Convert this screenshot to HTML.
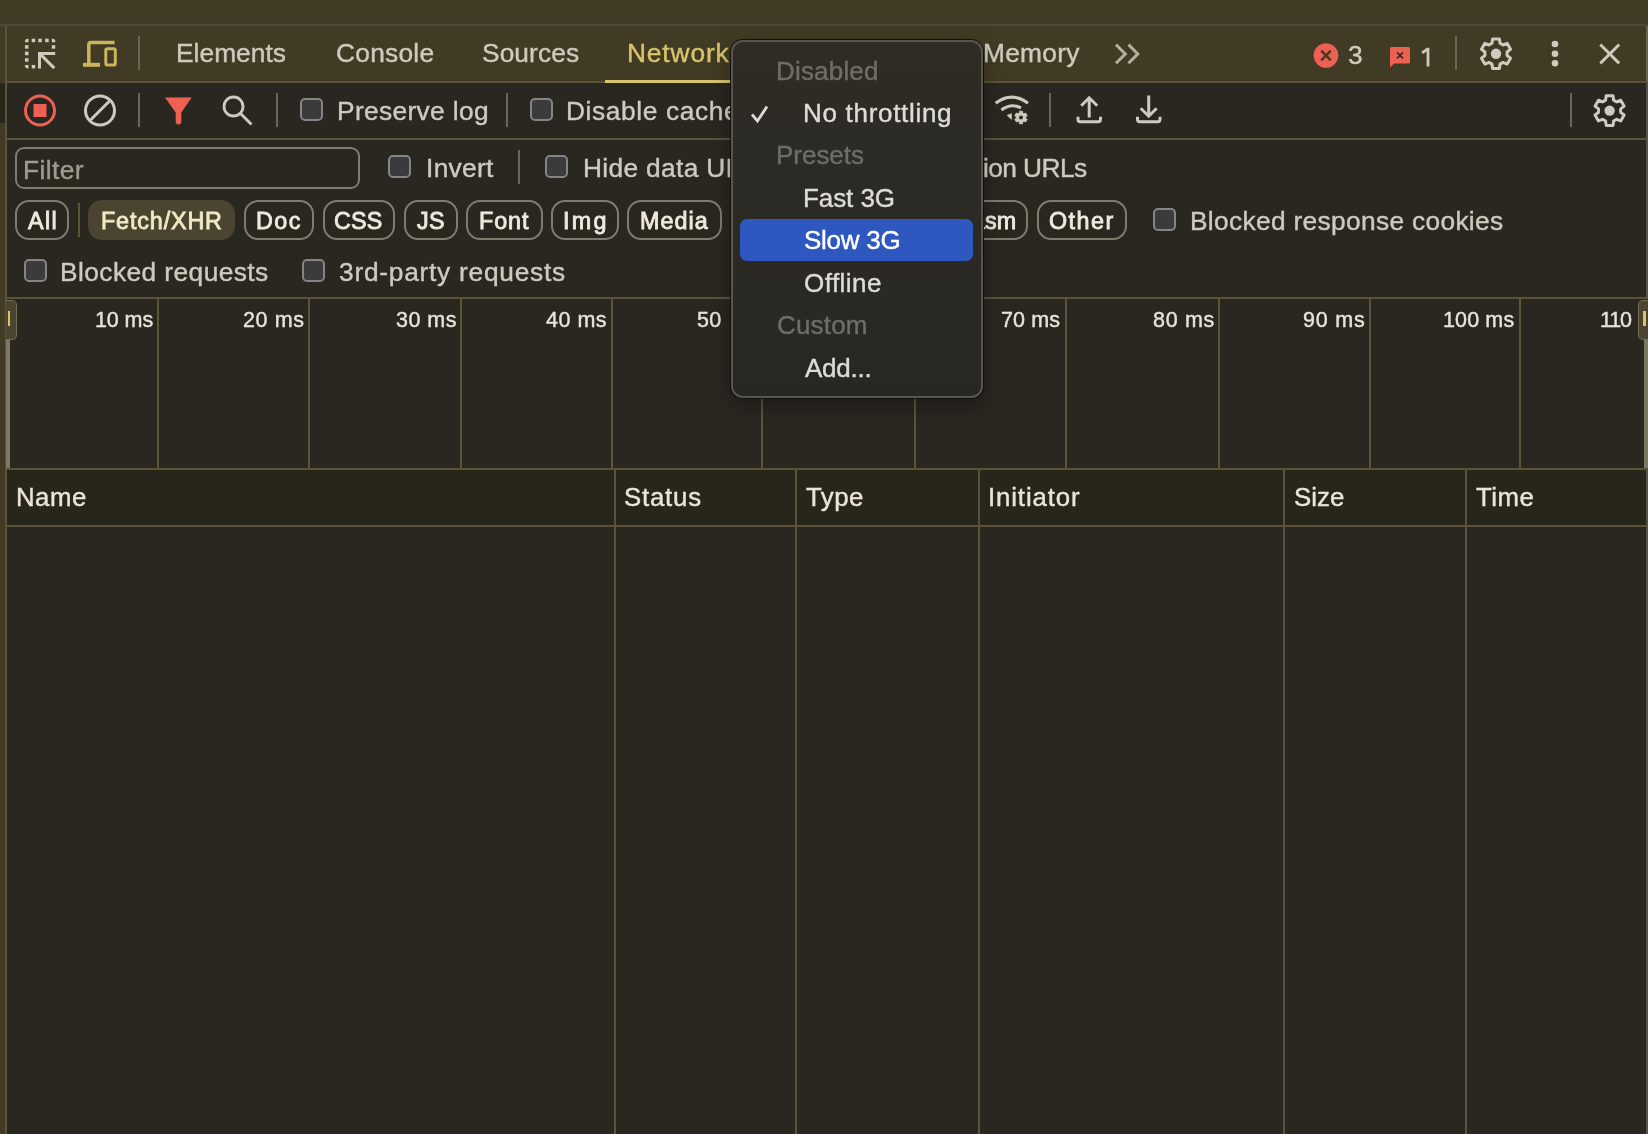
<!DOCTYPE html>
<html><head><meta charset="utf-8"><style>
html,body{margin:0;padding:0;}
body{width:1648px;height:1134px;overflow:hidden;position:relative;background:#2a2620;font-family:"Liberation Sans",sans-serif;}
body>div,body>svg{position:absolute;box-sizing:content-box;}
.t{white-space:pre;will-change:transform;-webkit-text-stroke:0.4px currentColor;}
</style></head><body>
<div style="left:0px;top:0px;width:1648px;height:24px;background:#413a24;"></div>
<div style="left:0px;top:24px;width:1648px;height:2px;background:#4a473b;"></div>
<div style="left:0px;top:26px;width:1648px;height:55px;background:#413a24;"></div>
<div style="left:0px;top:81px;width:1648px;height:2px;background:#5b5339;"></div>
<div style="left:0px;top:138px;width:1648px;height:2px;background:#5b5339;"></div>
<div style="left:0px;top:297px;width:1648px;height:2px;background:#5b5339;"></div>
<div style="left:0px;top:468px;width:1648px;height:2px;background:#5b5339;"></div>
<div style="left:0px;top:470px;width:1648px;height:55px;background:#28251b;"></div>
<div style="left:0px;top:525px;width:1648px;height:2px;background:#5b5339;"></div>
<div style="left:0px;top:26px;width:5px;height:1108px;background:#413a24;"></div>
<div style="left:0px;top:83px;width:5px;height:40px;background:#28251a;"></div>
<div style="left:5px;top:26px;width:2px;height:1108px;background:#5b5339;"></div>
<div style="left:1646px;top:26px;width:2px;height:55px;background:#6a6550;"></div>
<div style="left:1646px;top:83px;width:2px;height:1051px;background:#55544c;"></div>
<div style="left:614px;top:470px;width:2px;height:664px;background:#5b5339;"></div>
<div style="left:795px;top:470px;width:2px;height:664px;background:#5b5339;"></div>
<div style="left:978px;top:470px;width:2px;height:664px;background:#5b5339;"></div>
<div style="left:1283px;top:470px;width:2px;height:664px;background:#5b5339;"></div>
<div style="left:1465px;top:470px;width:2px;height:664px;background:#5b5339;"></div>
<div style="left:157px;top:299px;width:2px;height:169px;background:#5e5538;"></div>
<div style="left:308px;top:299px;width:2px;height:169px;background:#5e5538;"></div>
<div style="left:460px;top:299px;width:2px;height:169px;background:#5e5538;"></div>
<div style="left:611px;top:299px;width:2px;height:169px;background:#5e5538;"></div>
<div style="left:761px;top:299px;width:2px;height:169px;background:#5e5538;"></div>
<div style="left:914px;top:299px;width:2px;height:169px;background:#5e5538;"></div>
<div style="left:1065px;top:299px;width:2px;height:169px;background:#5e5538;"></div>
<div style="left:1218px;top:299px;width:2px;height:169px;background:#5e5538;"></div>
<div style="left:1369px;top:299px;width:2px;height:169px;background:#5e5538;"></div>
<div style="left:1519px;top:299px;width:2px;height:169px;background:#5e5538;"></div>
<svg style="left:0px;top:0px;" width="200" height="80" viewBox="0 0 200 80"><g fill="#cfcabe"><rect x="31.7" y="38.7" width="3.5" height="3.5"/><rect x="38.3" y="38.7" width="3.5" height="3.5"/><rect x="45.2" y="38.7" width="3.5" height="3.5"/><rect x="51.8" y="45.2" width="3.5" height="3.5"/><rect x="25" y="45.2" width="3.5" height="3.5"/><rect x="25" y="51.7" width="3.5" height="3.5"/><rect x="25" y="58.2" width="3.5" height="3.5"/><rect x="31.7" y="64.9" width="3.5" height="3.5"/>
<path d="M25 42.2 V41.5 Q25 38.7 27.8 38.7 H28.5 V42.2 Z"/>
<path d="M55.3 42.2 V41.5 Q55.3 38.7 52.5 38.7 H51.8 V42.2 Z"/>
<path d="M25 64.9 V65.6 Q25 68.4 27.8 68.4 H28.5 V64.9 Z"/>
<path d="M38 68.4 V52 H55.2 V55 H43.2 L55.3 67.1 L53.2 69.2 L41 57 V68.4 Z"/></g></svg>
<svg style="left:0px;top:0px;" width="200" height="80" viewBox="0 0 200 80"><path d="M88.8 63.5 V44.8 Q88.8 42.6 91 42.6 H114.6" stroke="#c9b55b" stroke-width="3.5" fill="none"/>
<rect x="83" y="62.8" width="17" height="4" fill="#c9b55b"/>
<rect x="105.8" y="48.8" width="9.5" height="16.2" rx="1.6" stroke="#c9b55b" stroke-width="3" fill="none"/></svg>
<div style="left:138px;top:36px;width:2px;height:34px;background:#6a6659;"></div>
<div class="t" style="left:176.20px;top:40.34px;font-size:26.3px;line-height:26.3px;color:#cfcabe;letter-spacing:0.047px;">Elements</div>
<div class="t" style="left:335.60px;top:40.34px;font-size:26.3px;line-height:26.3px;color:#cfcabe;letter-spacing:0.257px;">Console</div>
<div class="t" style="left:482.30px;top:40.34px;font-size:26.3px;line-height:26.3px;color:#cfcabe;letter-spacing:0.097px;">Sources</div>
<div class="t" style="left:627.30px;top:40.34px;font-size:26.3px;line-height:26.3px;color:#d9c46a;letter-spacing:0.868px;">Network</div>
<div style="left:605px;top:80px;width:126px;height:3px;background:#d9c46a;"></div>
<div class="t" style="left:982.60px;top:40.34px;font-size:26.3px;line-height:26.3px;color:#cfcabe;letter-spacing:0.276px;">Memory</div>
<svg style="left:0px;top:0px;" width="1648" height="80" viewBox="0 0 1648 80"><path d="M1116 44.6 L1125.3 53.9 L1116 63.2 M1128.5 44.6 L1137.8 53.9 L1128.5 63.2" stroke="#b3ae9f" stroke-width="3" fill="none"/></svg>
<svg style="left:1313px;top:43px;" width="26" height="26" viewBox="0 0 26 26"><circle cx="13" cy="12.5" r="12.3" fill="#ee6152"/><path d="M8.2 7.7 L17.8 17.3 M17.8 7.7 L8.2 17.3" stroke="#413a24" stroke-width="2.4"/></svg>
<div class="t" style="left:1347.60px;top:42.34px;font-size:26.3px;line-height:26.3px;color:#cfcabe;">3</div>
<svg style="left:1389px;top:46px;" width="23" height="23" viewBox="0 0 23 23"><path d="M1 2.5 Q1 1 2.5 1 H19.5 Q21 1 21 2.5 V16 Q21 17.5 19.5 17.5 H5 L1 21.5 Z" fill="#ee6152"/><path d="M8 6.3 L14 12.4 M14 6.3 L8 12.4" stroke="#2e2a1c" stroke-width="1.5"/></svg>
<svg style="left:0px;top:0px;" width="1648" height="80" viewBox="0 0 1648 80"><path d="M1422.2 52.9 L1427.4 49.2 H1428 V66.5" stroke="#cfcabe" stroke-width="2.8" fill="none" stroke-linejoin="miter"/></svg>
<div style="left:1455px;top:36px;width:2px;height:34px;background:#6a6659;"></div>
<svg style="left:1478px;top:36px;" width="36" height="36" viewBox="0 0 36 36"><path d="M14.58 2.89 L21.42 2.89 L22.01 7.24 L25.05 9.00 L29.12 7.33 L32.54 13.26 L29.06 15.95 L29.06 19.45 L32.54 22.14 L29.12 28.07 L25.05 26.40 L22.01 28.16 L21.42 32.51 L14.58 32.51 L13.99 28.16 L10.95 26.40 L6.88 28.07 L3.46 22.14 L6.94 19.45 L6.94 15.95 L3.46 13.26 L6.88 7.33 L10.95 9.00 L13.99 7.24 Z" fill="none" stroke="#cfcabe" stroke-width="3" stroke-linejoin="round"/><circle cx="18" cy="17.7" r="5.2" fill="#cfcabe"/></svg>
<svg style="left:1548px;top:38px;" width="14" height="30" viewBox="0 0 14 30"><g fill="#cfcabe"><circle cx="7" cy="6" r="3.3"/><circle cx="7" cy="15.7" r="3.3"/><circle cx="7" cy="25.2" r="3.3"/></g></svg>
<svg style="left:0px;top:0px;" width="1648" height="80" viewBox="0 0 1648 80"><path d="M1600.3 44.5 L1619.2 63.4 M1619.2 44.5 L1600.3 63.4" stroke="#cfcabe" stroke-width="2.9"/></svg>
<svg style="left:22px;top:92px;" width="36" height="36" viewBox="0 0 36 36"><circle cx="18" cy="18.5" r="14.5" stroke="#ee6152" stroke-width="3" fill="none"/><rect x="11.5" y="12" width="13" height="13" fill="#ee6152"/></svg>
<svg style="left:82px;top:92px;" width="36" height="36" viewBox="0 0 36 36"><circle cx="18" cy="18.5" r="14.5" stroke="#cfcabe" stroke-width="3" fill="none"/><path d="M8.5 28 L27.5 9" stroke="#cfcabe" stroke-width="3"/></svg>
<div style="left:138px;top:93px;width:2px;height:34px;background:#6a6659;"></div>
<svg style="left:0px;top:0px;" width="300" height="140" viewBox="0 0 300 140"><path d="M165.5 97.8 H191.2 L181 112.5 V122 Q181 124.2 178.5 124.2 Q176 124.2 176 122 V112.5 Z" fill="#ee6152" stroke="#ee6152" stroke-width="0.6" stroke-linejoin="round"/></svg>
<svg style="left:220px;top:93px;" width="36" height="36" viewBox="0 0 36 36"><circle cx="13.5" cy="13.5" r="9.5" stroke="#cfcabe" stroke-width="2.8" fill="none"/><path d="M20.5 20.5 L31.5 31.5" stroke="#cfcabe" stroke-width="2.8"/></svg>
<div style="left:276px;top:93px;width:2px;height:34px;background:#6a6659;"></div>
<div style="left:300px;top:98px;width:19px;height:19px;border:2px solid #858585;border-radius:5px;background:#3b3b3b"></div>
<div class="t" style="left:336.90px;top:97.94px;font-size:26.3px;line-height:26.3px;color:#cfcabe;letter-spacing:0.355px;">Preserve log</div>
<div style="left:506px;top:93px;width:2px;height:34px;background:#6a6659;"></div>
<div style="left:530px;top:98px;width:19px;height:19px;border:2px solid #858585;border-radius:5px;background:#3b3b3b"></div>
<div class="t" style="left:566.40px;top:97.94px;font-size:26.3px;line-height:26.3px;color:#cfcabe;letter-spacing:0.621px;">Disable cache</div>
<svg style="left:0px;top:0px;pointer-events:none" width="1648" height="140" viewBox="0 0 1648 140"><path d="M995.6 103.2 Q1011.8 91 1028 103.2" stroke="#cfcabe" stroke-width="3.1" fill="none"/>
<path d="M1001.4 110 Q1011 102.6 1021 107.9" stroke="#cfcabe" stroke-width="3" fill="none"/>
<path d="M1011.8 113.3 L1006.6 115.3 L1011.8 120 Z" fill="#cfcabe"/>
<g transform="translate(1021,117.5)"><path d="M-1.57 -6.31 L1.57 -6.31 L1.76 -4.36 L2.89 -3.70 L4.68 -4.52 L6.25 -1.79 L4.65 -0.65 L4.65 0.65 L6.25 1.79 L4.68 4.52 L2.89 3.70 L1.76 4.36 L1.57 6.31 L-1.57 6.31 L-1.76 4.36 L-2.89 3.70 L-4.68 4.52 L-6.25 1.79 L-4.65 0.65 L-4.65 -0.65 L-6.25 -1.79 L-4.68 -4.52 L-2.89 -3.70 L-1.76 -4.36 Z" fill="#cfcabe" stroke="#cfcabe" stroke-width="0.8" stroke-linejoin="round"/><circle r="1.9" fill="#2a2620"/></g></svg>
<div style="left:1049px;top:93px;width:2px;height:34px;background:#6a6659;"></div>
<svg style="left:0px;top:0px;" width="1648" height="140" viewBox="0 0 1648 140"><path d="M1089.2 117.5 V98.5 M1081.2 105.8 L1089.2 97.8 L1097.2 105.8" stroke="#cfcabe" stroke-width="3" fill="none"/><path d="M1078 116.8 V119.5 Q1078 121.7 1080.2 121.7 H1098.2 Q1100.5 121.7 1100.5 119.5 V116.8" stroke="#cfcabe" stroke-width="3" fill="none"/></svg>
<svg style="left:0px;top:0px;" width="1648" height="140" viewBox="0 0 1648 140"><path d="M1148.7 95.5 V115.5 M1140.7 108.2 L1148.7 116.2 L1156.7 108.2" stroke="#cfcabe" stroke-width="3" fill="none"/><path d="M1137.5 116.8 V119.5 Q1137.5 121.7 1139.7 121.7 H1157.7 Q1160 121.7 1160 119.5 V116.8" stroke="#cfcabe" stroke-width="3" fill="none"/></svg>
<div style="left:1570px;top:93px;width:2px;height:34px;background:#6a6659;"></div>
<svg style="left:1592px;top:93px;" width="36" height="36" viewBox="0 0 36 36"><path d="M14.18 2.79 L21.02 2.79 L21.61 7.14 L24.65 8.90 L28.72 7.23 L32.14 13.16 L28.66 15.85 L28.66 19.35 L32.14 22.04 L28.72 27.97 L24.65 26.30 L21.61 28.06 L21.02 32.41 L14.18 32.41 L13.59 28.06 L10.55 26.30 L6.48 27.97 L3.06 22.04 L6.54 19.35 L6.54 15.85 L3.06 13.16 L6.48 7.23 L10.55 8.90 L13.59 7.14 Z" fill="none" stroke="#cfcabe" stroke-width="3" stroke-linejoin="round"/><circle cx="17.6" cy="17.6" r="5.2" fill="#cfcabe"/></svg>
<div style="left:15px;top:146.5px;width:341px;height:38px;border:2px solid #7f7c6e;border-radius:9px"></div>
<div class="t" style="left:22.90px;top:156.64px;font-size:26.3px;line-height:26.3px;color:#9f9c8e;letter-spacing:0.424px;">Filter</div>
<div style="left:388px;top:155px;width:19px;height:19px;border:2px solid #858585;border-radius:5px;background:#3b3b3b"></div>
<div class="t" style="left:425.70px;top:155.14px;font-size:26.3px;line-height:26.3px;color:#cfcabe;letter-spacing:0.328px;">Invert</div>
<div style="left:518px;top:150px;width:2px;height:34px;background:#6a6659;"></div>
<div style="left:545px;top:155px;width:19px;height:19px;border:2px solid #858585;border-radius:5px;background:#3b3b3b"></div>
<div class="t" style="left:582.70px;top:155.14px;font-size:26.3px;line-height:26.3px;color:#cfcabe;letter-spacing:0.347px;">Hide data URLs</div>
<div class="t" style="left:982.70px;top:155.14px;font-size:26.3px;line-height:26.3px;color:#cfcabe;letter-spacing:-0.572px;">ion URLs</div>
<div style="left:15px;top:200px;width:50px;height:36px;border:2px solid #7f7c6e;border-radius:14px"></div>
<div class="t" style="left:28.20px;top:209.68px;font-size:23.3px;line-height:23.3px;color:#efeadd;letter-spacing:1.343px;-webkit-text-stroke:0.85px currentColor;">All</div>
<div style="left:78px;top:203px;width:2px;height:34px;background:#5e5538;"></div>
<div style="left:88px;top:200px;width:147px;height:40px;border-radius:14px;background:#4b4430"></div>
<div class="t" style="left:101.30px;top:209.68px;font-size:23.3px;line-height:23.3px;color:#f1e8c4;letter-spacing:0.875px;-webkit-text-stroke:0.85px currentColor;">Fetch/XHR</div>
<div style="left:244px;top:200px;width:66px;height:36px;border:2px solid #7f7c6e;border-radius:14px"></div>
<div class="t" style="left:256.00px;top:209.68px;font-size:23.3px;line-height:23.3px;color:#efeadd;letter-spacing:1.510px;-webkit-text-stroke:0.85px currentColor;">Doc</div>
<div style="left:323px;top:200px;width:68px;height:36px;border:2px solid #7f7c6e;border-radius:14px"></div>
<div class="t" style="left:334.30px;top:209.68px;font-size:23.3px;line-height:23.3px;color:#efeadd;letter-spacing:0.168px;-webkit-text-stroke:0.85px currentColor;">CSS</div>
<div style="left:404px;top:200px;width:50px;height:36px;border:2px solid #7f7c6e;border-radius:14px"></div>
<div class="t" style="left:417.00px;top:209.68px;font-size:23.3px;line-height:23.3px;color:#efeadd;letter-spacing:0.352px;-webkit-text-stroke:0.85px currentColor;">JS</div>
<div style="left:466px;top:200px;width:73px;height:36px;border:2px solid #7f7c6e;border-radius:14px"></div>
<div class="t" style="left:479.00px;top:209.68px;font-size:23.3px;line-height:23.3px;color:#efeadd;letter-spacing:0.952px;-webkit-text-stroke:0.85px currentColor;">Font</div>
<div style="left:551px;top:200px;width:64px;height:36px;border:2px solid #7f7c6e;border-radius:14px"></div>
<div class="t" style="left:562.60px;top:209.68px;font-size:23.3px;line-height:23.3px;color:#efeadd;letter-spacing:2.260px;-webkit-text-stroke:0.85px currentColor;">Img</div>
<div style="left:627px;top:200px;width:91px;height:36px;border:2px solid #7f7c6e;border-radius:14px"></div>
<div class="t" style="left:640.20px;top:209.68px;font-size:23.3px;line-height:23.3px;color:#efeadd;letter-spacing:1.051px;-webkit-text-stroke:0.85px currentColor;">Media</div>
<div style="left:731px;top:200px;width:134px;height:36px;border:2px solid #7f7c6e;border-radius:14px"></div>
<div class="t" style="left:731px;width:138px;text-align:center;top:210.08px;font-size:23.3px;line-height:23.3px;font-weight:700;color:#efeadd">Manifest</div>
<div style="left:878px;top:200px;width:51px;height:36px;border:2px solid #7f7c6e;border-radius:14px"></div>
<div class="t" style="left:878px;width:55px;text-align:center;top:210.08px;font-size:23.3px;line-height:23.3px;font-weight:700;color:#efeadd">WS</div>
<div style="left:942px;top:200px;width:82px;height:36px;border:2px solid #7f7c6e;border-radius:14px"></div>
<div class="t" style="left:950.67px;top:209.68px;font-size:23.3px;line-height:23.3px;color:#efeadd;-webkit-text-stroke:0.85px currentColor;">Wasm</div>
<div style="left:1037px;top:200px;width:86px;height:36px;border:2px solid #7f7c6e;border-radius:14px"></div>
<div class="t" style="left:1049.00px;top:209.68px;font-size:23.3px;line-height:23.3px;color:#efeadd;letter-spacing:1.498px;-webkit-text-stroke:0.85px currentColor;">Other</div>
<div style="left:1153px;top:208px;width:19px;height:19px;border:2px solid #858585;border-radius:5px;background:#3b3b3b"></div>
<div class="t" style="left:1189.50px;top:207.54px;font-size:26.3px;line-height:26.3px;color:#cfcabe;letter-spacing:0.332px;">Blocked response cookies</div>
<div style="left:24px;top:259px;width:19px;height:19px;border:2px solid #858585;border-radius:5px;background:#3b3b3b"></div>
<div class="t" style="left:59.90px;top:258.74px;font-size:26.3px;line-height:26.3px;color:#cfcabe;letter-spacing:0.435px;">Blocked requests</div>
<div style="left:302px;top:259px;width:19px;height:19px;border:2px solid #858585;border-radius:5px;background:#3b3b3b"></div>
<div class="t" style="left:339.00px;top:258.74px;font-size:26.3px;line-height:26.3px;color:#cfcabe;letter-spacing:0.750px;">3rd-party requests</div>
<div class="t" style="left:94.60px;top:309.90px;font-size:21.5px;line-height:21.5px;color:#eae4d8;letter-spacing:-0.099px;">10 ms</div>
<div class="t" style="left:242.70px;top:309.90px;font-size:21.5px;line-height:21.5px;color:#eae4d8;letter-spacing:0.626px;">20 ms</div>
<div class="t" style="left:396.00px;top:309.90px;font-size:21.5px;line-height:21.5px;color:#eae4d8;letter-spacing:0.476px;">30 ms</div>
<div class="t" style="left:546.00px;top:309.90px;font-size:21.5px;line-height:21.5px;color:#eae4d8;letter-spacing:0.501px;">40 ms</div>
<div class="t" style="left:1001.00px;top:309.90px;font-size:21.5px;line-height:21.5px;color:#eae4d8;letter-spacing:0.126px;">70 ms</div>
<div class="t" style="left:1152.70px;top:309.90px;font-size:21.5px;line-height:21.5px;color:#eae4d8;letter-spacing:0.676px;">80 ms</div>
<div class="t" style="left:1302.60px;top:309.90px;font-size:21.5px;line-height:21.5px;color:#eae4d8;letter-spacing:0.776px;">90 ms</div>
<div class="t" style="left:1443.40px;top:309.90px;font-size:21.5px;line-height:21.5px;color:#eae4d8;letter-spacing:0.129px;">100 ms</div>
<div class="t" style="left:696.90px;top:309.90px;font-size:21.5px;line-height:21.5px;color:#eae4d8;letter-spacing:0.243px;">50</div>
<div class="t" style="left:1599.70px;top:309.90px;font-size:21.5px;line-height:21.5px;color:#eae4d8;letter-spacing:-1.209px;">110</div>
<div style="left:6px;top:339px;width:4px;height:129px;background:#7d7660;"></div>
<div style="left:6px;top:299.5px;width:9.5px;height:38px;background:#4b4430;border:1.2px solid #766e54;border-left:none;border-radius:0 5px 5px 0"></div>
<div style="left:8.2px;top:311px;width:2px;height:15px;background:#d8c566;"></div>
<div style="left:1637px;top:299px;width:11px;height:41px;background:#2a2620;"></div>
<div style="left:1638px;top:299.5px;width:10px;height:38.5px;background:#4b4430;border:1.2px solid #766e54;border-right:none;border-radius:5px 0 0 5px"></div>
<div style="left:1643px;top:311px;width:2.5px;height:15px;background:#d8c566;"></div>
<div style="left:1644px;top:339.5px;width:4px;height:128.5px;background:#7d7660;"></div>
<div class="t" style="left:16.10px;top:485.46px;font-size:25.8px;line-height:25.8px;color:#ebe5d8;letter-spacing:0.478px;">Name</div>
<div class="t" style="left:624.00px;top:485.46px;font-size:25.8px;line-height:25.8px;color:#ebe5d8;letter-spacing:0.793px;">Status</div>
<div class="t" style="left:806.10px;top:485.46px;font-size:25.8px;line-height:25.8px;color:#ebe5d8;letter-spacing:0.473px;">Type</div>
<div class="t" style="left:988.00px;top:485.46px;font-size:25.8px;line-height:25.8px;color:#ebe5d8;letter-spacing:0.874px;">Initiator</div>
<div class="t" style="left:1293.50px;top:485.46px;font-size:25.8px;line-height:25.8px;color:#ebe5d8;letter-spacing:0.021px;">Size</div>
<div class="t" style="left:1475.70px;top:485.46px;font-size:25.8px;line-height:25.8px;color:#ebe5d8;letter-spacing:0.460px;">Time</div>
<div style="left:731px;top:40px;width:248px;height:354px;background:linear-gradient(to bottom,#2f2c25 0%,#2d2b25 25%,#282722 100%);border:2px solid #56554f;border-radius:12px;box-shadow:0 0 0 1px rgba(14,13,8,0.9),0 8px 22px rgba(0,0,0,0.3)"></div>
<div class="t" style="left:776.00px;top:57.59px;font-size:26px;line-height:26px;color:#6e6d67;letter-spacing:0.184px;">Disabled</div>
<svg style="left:748px;top:102px;" width="24" height="24" viewBox="0 0 24 24"><path d="M4 12.5 L9.5 19 L19 4.5" stroke="#dedcd8" stroke-width="2.8" fill="none"/></svg>
<div class="t" style="left:803.00px;top:100.19px;font-size:26px;line-height:26px;color:#dedcd8;letter-spacing:0.698px;">No throttling</div>
<div class="t" style="left:776.00px;top:141.99px;font-size:26px;line-height:26px;color:#6e6d67;letter-spacing:-0.024px;">Presets</div>
<div class="t" style="left:803.00px;top:184.79px;font-size:26px;line-height:26px;color:#dedcd8;letter-spacing:-0.075px;">Fast 3G</div>
<div style="left:740px;top:219px;width:233px;height:42px;background:#2e58bf;border-radius:7px"></div>
<div class="t" style="left:804.00px;top:227.39px;font-size:26px;line-height:26px;color:#ffffff;letter-spacing:-0.256px;">Slow 3G</div>
<div class="t" style="left:804.00px;top:269.69px;font-size:26px;line-height:26px;color:#dedcd8;letter-spacing:0.464px;">Offline</div>
<div class="t" style="left:776.80px;top:312.09px;font-size:26px;line-height:26px;color:#6e6d67;letter-spacing:0.176px;">Custom</div>
<div class="t" style="left:804.70px;top:354.89px;font-size:26px;line-height:26px;color:#dedcd8;letter-spacing:-0.222px;">Add...</div>
</body></html>
